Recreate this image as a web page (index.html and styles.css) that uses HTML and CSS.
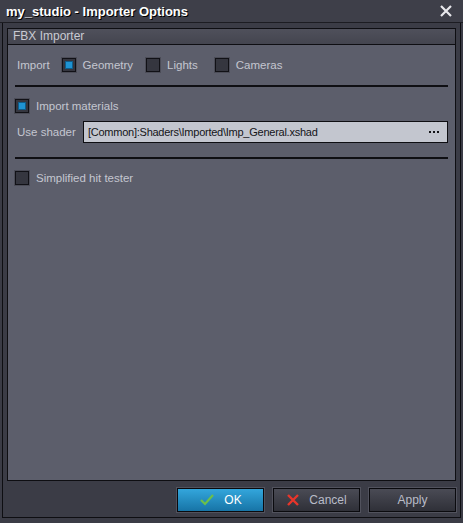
FILE: index.html
```html
<!DOCTYPE html>
<html>
<head>
<meta charset="utf-8">
<link rel="stylesheet" href="styles.css">
</head>
<body>
<div class="window">
  <div class="titlebar">
    <span class="title">my_studio - Importer Options</span>
    <svg class="close" width="14" height="14" viewBox="0 0 14 14"><path d="M2 2 L12 12 M12 2 L2 12" stroke="#e8e8ec" stroke-width="2.2" fill="none"/></svg>
  </div>
  <div class="main">
    <div class="panel">
      <div class="panel-head">FBX Importer</div>
      <div class="panel-body">
        <div class="row import-row">
          <span class="label">Import</span>
          <span class="check on"><span class="mark"></span></span><span class="clabel geo">Geometry</span>
          <span class="check"></span><span class="clabel lights">Lights</span>
          <span class="check"></span><span class="clabel">Cameras</span>
        </div>
        <div class="sep"></div>
        <div class="row mat-row">
          <span class="check on"><span class="mark"></span></span><span class="clabel">Import materials</span>
        </div>
        <div class="row shader-row">
          <span class="label">Use shader</span>
          <div class="input"><span>[Common]:Shaders\Imported\Imp_General.xshad</span><span class="dots"><i></i><i></i><i></i></span></div>
        </div>
        <div class="sep sep2"></div>
        <div class="row hit-row">
          <span class="check"></span><span class="clabel">Simplified hit tester</span>
        </div>
      </div>
    </div>
    <div class="buttons">
      <button class="btn ok"><svg width="16" height="14" viewBox="0 0 16 14"><path d="M2 7 L6 11 L14 2" stroke="#6cc04a" stroke-width="2.2" fill="none"/></svg>OK</button>
      <button class="btn"><svg width="14" height="14" viewBox="0 0 14 14"><path d="M2 2 L12 12 M12 2 L2 12" stroke="#e8352a" stroke-width="2.4" fill="none"/></svg>Cancel</button>
      <button class="btn">Apply</button>
    </div>
  </div>
</div>
</body>
</html>
```

FILE: styles.css
```css
html, body {
  margin: 0;
  padding: 0;
}
body {
  width: 463px;
  height: 523px;
  background: #3b3c46;
  font-family: "Liberation Sans", Arial, sans-serif;
  font-size: 11.5px;
  color: #c4c6d0;
  overflow: hidden;
}
.window {
  display: flex;
  flex-direction: column;
  height: 523px;
}
.titlebar {
  height: 23px;
  flex: none;
  box-sizing: border-box;
  border-bottom: 1px solid #1c1c22;
  background: #3e3f49;
  display: flex;
  align-items: center;
  justify-content: space-between;
  padding: 0 10px 0 6px;
}
.title {
  font-weight: bold;
  font-size: 13px;
  color: #ffffff;
  text-shadow: 1px 1px 0 #000;
}
.close {
  display: block;
}
.main {
  flex: 1;
  margin: 0 2px 5px 2px;
  border: 1px solid #0e0e12;
  border-top: none;
  padding: 5px 4px 5px 4px;
  display: flex;
  flex-direction: column;
  background: #3b3c46;
}
.panel {
  flex: 1;
  border: 1px solid #0e0e12;
  background: #5c5e6b;
  display: flex;
  flex-direction: column;
}
.panel-head {
  height: 15px;
  border-bottom: 1px solid #0e0e12;
  background: linear-gradient(#4f505b, #44454f);
  color: #c9cad2;
  padding-left: 5px;
  line-height: 15px;
  font-size: 12px;
}
.panel-body {
  padding: 13px 7px 0 7px;
}
.row {
  display: flex;
  align-items: center;
}
.label {
  padding-left: 2px;
}
.import-row .label {
  margin-right: 12px;
}
.check {
  width: 14px;
  height: 14px;
  box-sizing: border-box;
  border: 1px solid #111116;
  background: #35363f;
  box-shadow: 0 0 0 1px #4b4c57;
  display: flex;
  align-items: center;
  justify-content: center;
  flex: none;
}
.mark {
  width: 8px;
  height: 8px;
  box-sizing: border-box;
  background: #1f93d2;
  border: 1px solid #0f5d8a;
}
.clabel {
  margin-left: 7px;
}
.clabel.geo {
  margin-right: 13px;
}
.clabel.lights {
  margin-right: 17px;
}
.sep {
  height: 2px;
  background: #0f0f13;
  margin: 13px 0 12px 0;
}
.shader-row {
  margin-top: 8px;
}
.shader-row .label {
  width: 66px;
  flex: none;
}
.input {
  flex: 1;
  height: 22px;
  box-sizing: border-box;
  border: 1px solid #0e0e12;
  background: #c3c6cf;
  color: #141418;
  font-size: 11px;
  letter-spacing: -0.25px;
  display: flex;
  align-items: center;
  justify-content: space-between;
  padding: 0 8px 0 4px;
}
.dots {
  display: flex;
  gap: 2px;
}
.dots i {
  width: 2px;
  height: 2px;
  background: #141418;
}
.sep2 {
  margin-top: 14px;
  margin-bottom: 12px;
}
.buttons {
  display: flex;
  justify-content: flex-end;
  gap: 9px;
  margin-top: 7px;
}
.btn {
  width: 87px;
  height: 24px;
  box-sizing: border-box;
  border: 1px solid #0a0a0e;
  box-shadow: 0 0 0 1px #51525d;
  background: linear-gradient(#4a4b55, #2f3038);
  color: #b9bcc8;
  font-family: "Liberation Sans", Arial, sans-serif;
  font-size: 12px;
  display: flex;
  align-items: center;
  justify-content: center;
  gap: 9px;
  padding: 0;
}
.btn.ok {
  background: linear-gradient(#33a6dc, #1774a6);
  color: #ffffff;
}
.btn svg {
  display: block;
}
```
